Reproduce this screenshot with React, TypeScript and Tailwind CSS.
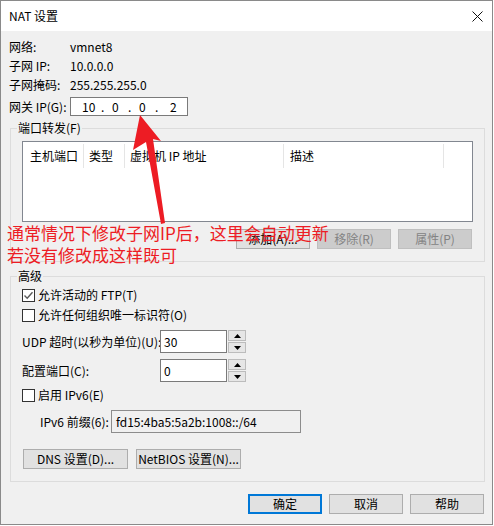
import React from "react";

const ui = "font-['Noto_Sans_CJK_SC',sans-serif] text-[12px] leading-[16px] text-black";

function Button({
  children,
  width = "w-[74px]",
  disabled = false,
  primary = false,
}: {
  children: React.ReactNode;
  width?: string;
  disabled?: boolean;
  primary?: boolean;
}) {
  const tone = primary
    ? "border-2 border-[#0078d7] bg-[#e1e1e1] text-black"
    : disabled
    ? "border border-[#bfbfbf] bg-[#cccccc] text-[#838383]"
    : "border border-[#adadad] bg-[#e1e1e1] text-black";
  return (
    <div className={`${width} h-[20px] flex items-center justify-center whitespace-nowrap ${tone}`}>
      {children}
    </div>
  );
}

function Checkbox({ checked = false, label }: { checked?: boolean; label: string }) {
  return (
    <div className="flex items-center h-[16px] ml-[11px]">
      <div className="w-[13px] h-[13px] border border-[#333333] bg-white flex items-center justify-center">
        {checked && (
          <svg width="11" height="11" viewBox="0 0 11 11">
            <path d="M1.5 5.5 L4.2 8.2 L9.5 2.2" fill="none" stroke="#5a5a5a" strokeWidth="1.4" />
          </svg>
        )}
      </div>
      <span className="ml-[3px] whitespace-nowrap">{label}</span>
    </div>
  );
}

function Spin({ value }: { value: string }) {
  return (
    <div className="flex h-[23px]">
      <div className="w-[67px] h-[23px] border border-[#7a7a7a] bg-white pl-[3px] flex items-center">
        {value}
      </div>
      <div className="ml-[1px] w-[18px] flex flex-col gap-[1px]">
        <div className="h-[11px] border border-[#bcbcbc] bg-[#e6e6e6] flex items-center justify-center">
          <svg width="7" height="4" viewBox="0 0 7 4">
            <path d="M3.5 0 L7 4 L0 4 Z" fill="#000" />
          </svg>
        </div>
        <div className="h-[11px] border border-[#bcbcbc] bg-[#e6e6e6] flex items-center justify-center">
          <svg width="7" height="4" viewBox="0 0 7 4">
            <path d="M0 0 L7 0 L3.5 4 Z" fill="#000" />
          </svg>
        </div>
      </div>
    </div>
  );
}

const columns = [
  { label: "主机端口", w: "w-[61px]", pl: "pl-[7px]" },
  { label: "类型", w: "w-[41px]", pl: "pl-[5px]" },
  { label: "虚拟机 IP 地址", w: "w-[159px]", pl: "pl-[5px]" },
  { label: "描述", w: "w-[160px]", pl: "pl-[6px]" },
];

export default function App() {
  return (
    <div className={`relative w-[494px] h-[526px] bg-white overflow-hidden ${ui}`}>
      <div className="w-[493px] h-[525px] border border-[#8a8a8a] flex flex-col bg-[#f0f0f0]">
        {/* title bar */}
        <div className="h-[30px] bg-white flex items-center justify-between pl-[8px] pr-[9px] shrink-0">
          <span>NAT 设置</span>
          <svg width="11" height="11" viewBox="0 0 11 11">
            <path d="M0.5 0.5 L10.5 10.5 M10.5 0.5 L0.5 10.5" stroke="#111" strokeWidth="1" />
          </svg>
        </div>

        <div className="flex-1 flex flex-col">
          {/* network info */}
          <div className="grid grid-cols-[61px_auto] pl-[8px] pt-[6px]">
            <div className="h-[19px] flex items-center">网络:</div>
            <div className="h-[19px] flex items-center">vmnet8</div>
            <div className="h-[19px] flex items-center">子网 IP:</div>
            <div className="h-[19px] flex items-center">10.0.0.0</div>
            <div className="h-[19px] flex items-center">子网掩码:</div>
            <div className="h-[19px] flex items-center">255.255.255.0</div>
            <div className="h-[19px] mt-[3px] flex items-center">网关 IP(G):</div>
            <div className="h-[19px] mt-[3px] w-[118px] border border-[#7a7a7a] bg-white flex items-center pl-[11px]">
              <span className="w-[19px]">10</span>
              <span className="w-[11px]">.</span>
              <span className="w-[16px]">0</span>
              <span className="w-[11px]">.</span>
              <span className="w-[16px]">0</span>
              <span className="w-[15px]">.</span>
              <span>2</span>
            </div>
          </div>

          {/* port forwarding */}
          <fieldset className="ml-[9px] mt-[4px] w-[475px] border border-[#dcdcdc] pb-[12px]">
            <legend className="ml-[6px] px-[1px] leading-[16px]">端口转发(F)</legend>
            <div className="ml-[11px] mt-[5px] w-[451px] h-[81px] border border-[#828790] bg-white">
              <div className="flex h-[26px]">
                {columns.map((c) => (
                  <div
                    key={c.label}
                    className={`${c.w} ${c.pl} h-[24px] mt-[2px] border-r border-[#e5e5e5] flex items-center whitespace-nowrap`}
                  >
                    {c.label}
                  </div>
                ))}
              </div>
            </div>
            <div className="flex justify-end gap-[7px] mt-[7px] mr-[12px]">
              <Button>添加(A)...</Button>
              <Button disabled>移除(R)</Button>
              <Button disabled>属性(P)</Button>
            </div>
          </fieldset>

          {/* advanced */}
          <fieldset className="ml-[9px] mt-[6px] w-[475px] border border-[#dcdcdc] pb-[12px]">
            <legend className="ml-[6px] px-[1px] leading-[16px]">高级</legend>
            <div className="mt-[3px]">
              <Checkbox checked label="允许活动的 FTP(T)" />
            </div>
            <div className="mt-[4px]">
              <Checkbox label="允许任何组织唯一标识符(O)" />
            </div>
            <div className="flex items-center ml-[11px] mt-[7px]">
              <span className="w-[138px] whitespace-nowrap">UDP 超时(以秒为单位)(U):</span>
              <Spin value="30" />
            </div>
            <div className="flex items-center ml-[11px] mt-[6px]">
              <span className="w-[138px] whitespace-nowrap">配置端口(C):</span>
              <Spin value="0" />
            </div>
            <div className="mt-[5px]">
              <Checkbox label="启用 IPv6(E)" />
            </div>
            <div className="flex items-center ml-[29px] mt-[7px]">
              <span className="w-[71px] whitespace-nowrap">IPv6 前缀(6):</span>
              <div className="w-[190px] h-[23px] border border-[#8c8c8c] bg-[#f0f0f0] pl-[4px] flex items-center">
                fd15:4ba5:5a2b:1008::/64
              </div>
            </div>
            <div className="flex gap-[8px] ml-[12px] mt-[16px]">
              <Button width="w-[105px]">DNS 设置(D)...</Button>
              <Button width="w-[105px]">NetBIOS 设置(N)...</Button>
            </div>
          </fieldset>

          {/* dialog buttons */}
          <div className="flex justify-end gap-[7px] mt-[12px] mr-[8px]">
            <Button primary>确定</Button>
            <Button>取消</Button>
            <Button>帮助</Button>
          </div>
        </div>
      </div>

      {/* annotation overlay */}
      <div className="absolute left-[7px] top-[222px] text-[17px] leading-[22px] text-[#ed1c24] whitespace-nowrap">
        <div>通常情况下修改子网IP后，这里会自动更新</div>
        <div>若没有修改成这样既可</div>
      </div>
      <svg className="absolute left-0 top-0 pointer-events-none" width="494" height="526" viewBox="0 0 494 526">
        <polygon
          points="140,115 161,141 153,139 165,223 161,224 146,142 133,150"
          fill="#ed1c24"
        />
      </svg>
    </div>
  );
}
